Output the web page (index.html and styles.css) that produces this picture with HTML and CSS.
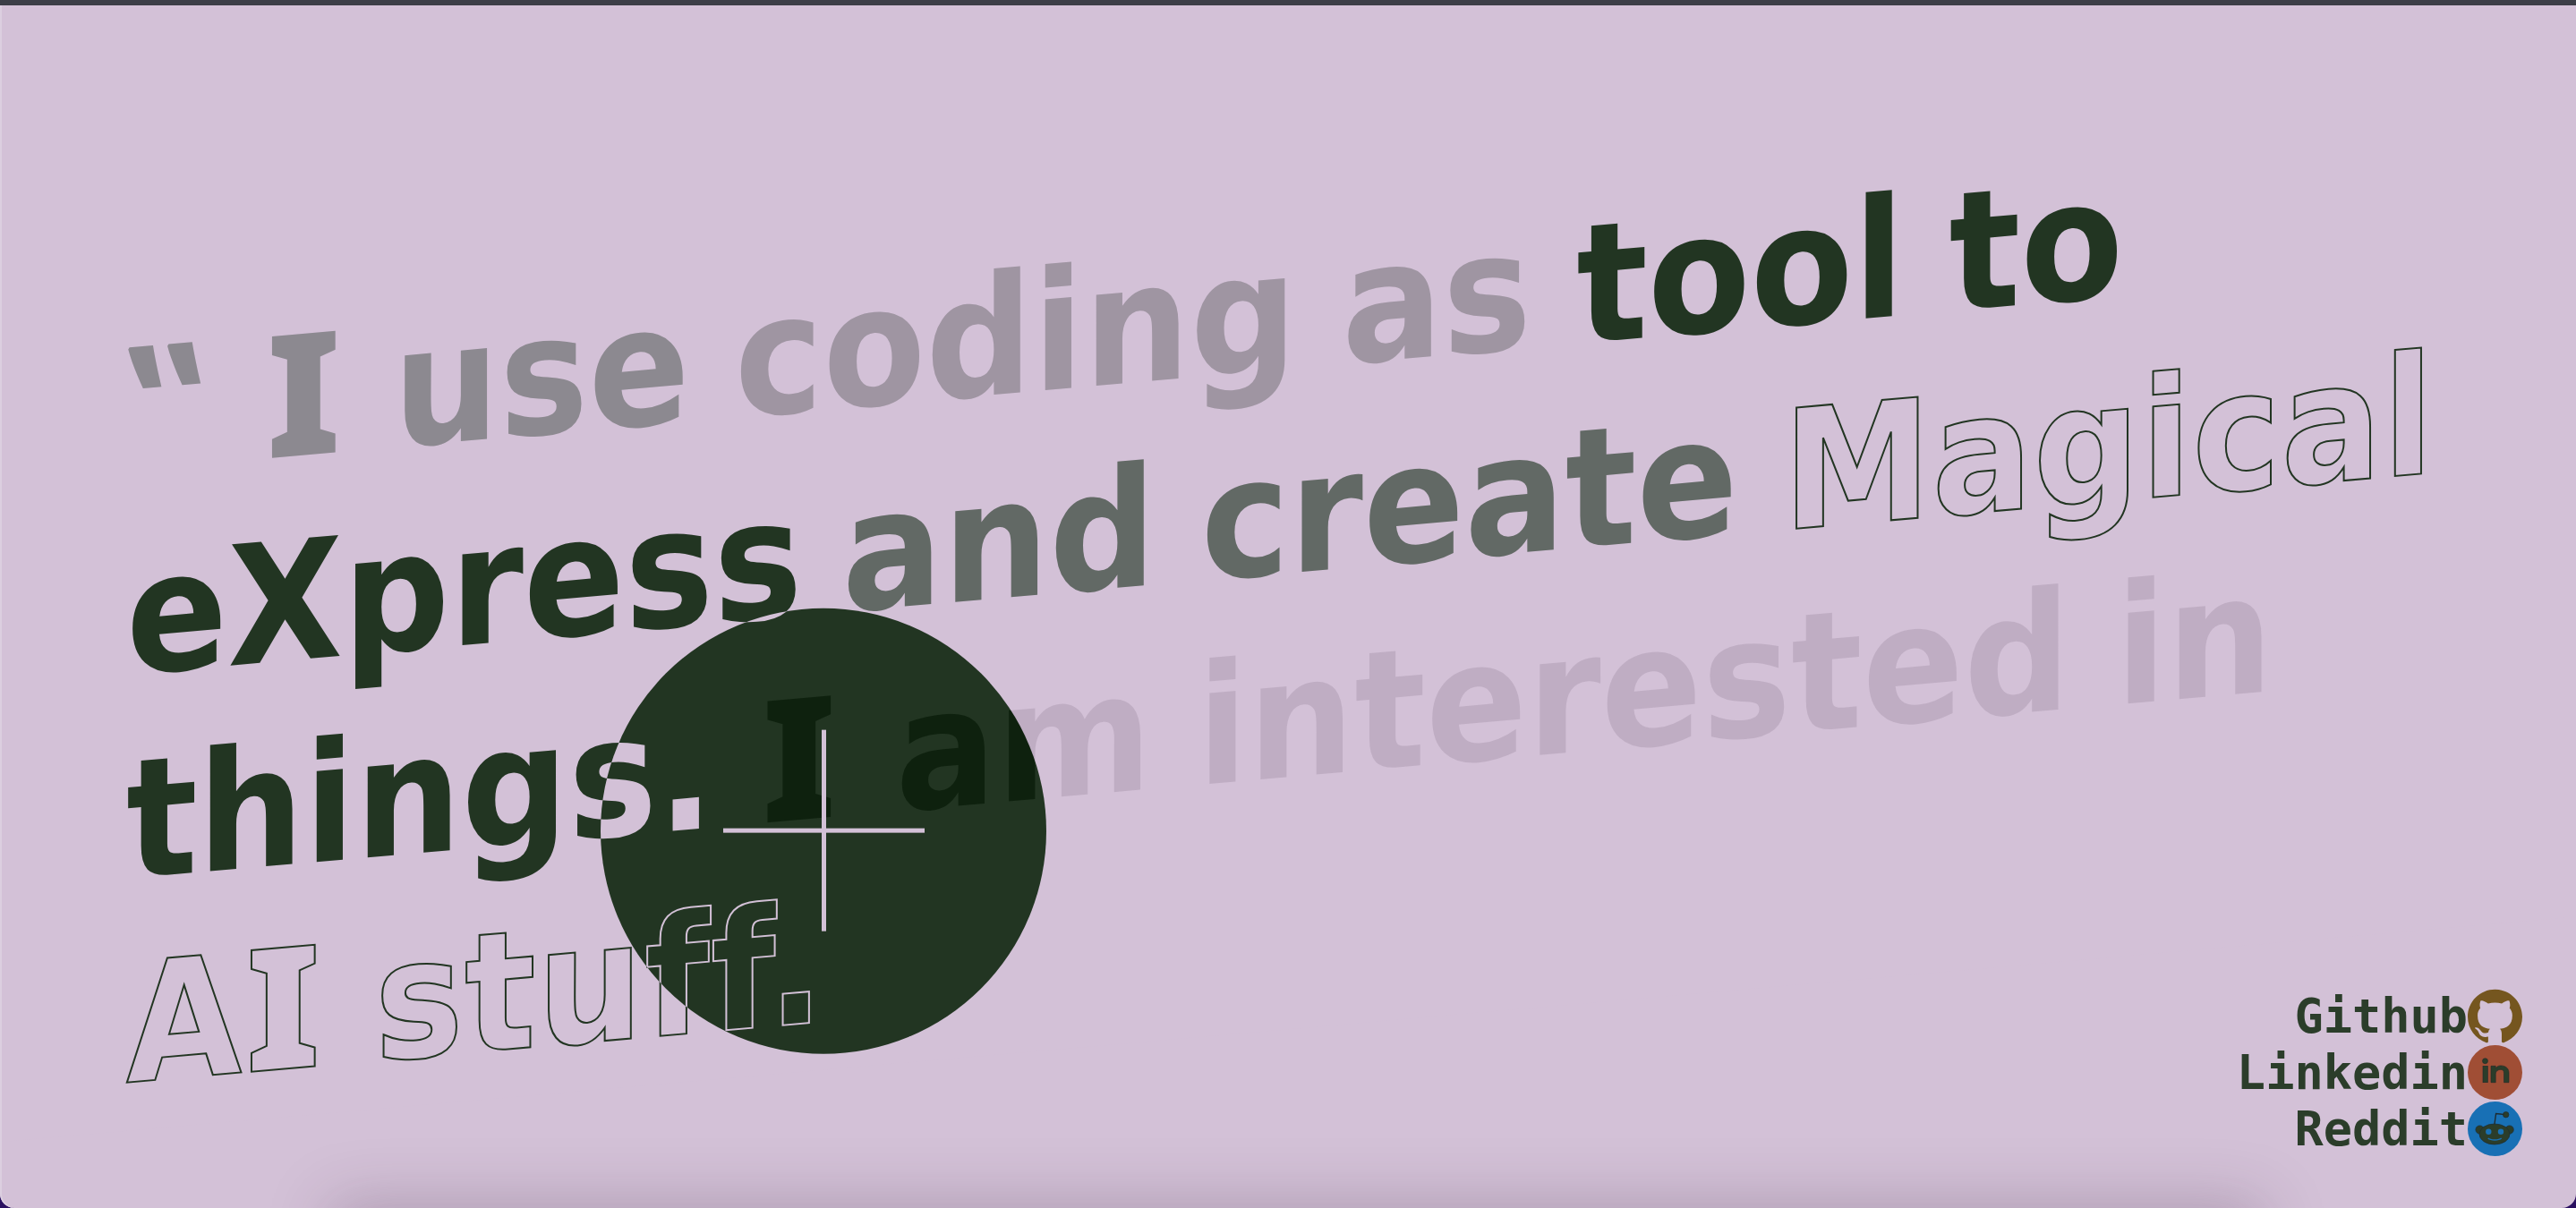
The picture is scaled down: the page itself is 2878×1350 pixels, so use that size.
FILE: index.html
```html
<!DOCTYPE html>
<html lang="en">
<head>
    <meta charset="UTF-8">
    <meta name="viewport" content="width=device-width, initial-scale=1.0">
    <title>Portfolio</title>
    <link rel="stylesheet" href="styles.css">
</head>
<body>
<main class="page">
    <div class="hero-layer">
        <h1 class="quote">
            <span class="fade-1"><span class="mark">‟</span> <span class="slab">I</span> use </span><span class="fade-2">coding as </span>tool to<br>
            eXpress <span class="fade-3">and create </span><span class="outline magical">Magical</span><br>
            things. <span class="fade-4"><span class="slab">I</span> am interested in</span><br>
            <span class="outline">A<span class="slab">I</span> stuff.</span>
        </h1>
        <div class="cursor"></div>
        <div class="cross"></div>
    </div>
    <div class="bottom-glow"></div>
    <nav class="socials">
        <a class="social">Github
            <svg class="badge" viewBox="0 0 24 24"><path fill="#75561f" d="M12 .297c-6.63 0-12 5.373-12 12 0 5.303 3.438 9.8 8.205 11.385.6.113.82-.258.82-.577 0-.285-.01-1.04-.015-2.04-3.338.724-4.042-1.61-4.042-1.61C4.422 18.07 3.633 17.7 3.633 17.7c-1.087-.744.084-.729.084-.729 1.205.084 1.838 1.236 1.838 1.236 1.07 1.835 2.809 1.305 3.495.998.108-.776.417-1.305.76-1.605-2.665-.3-5.466-1.332-5.466-5.93 0-1.31.465-2.38 1.235-3.22-.135-.303-.54-1.523.105-3.176 0 0 1.005-.322 3.3 1.23.96-.267 1.98-.399 3-.405 1.02.006 2.04.138 3 .405 2.28-1.552 3.285-1.23 3.285-1.23.645 1.653.24 2.873.12 3.176.765.84 1.23 1.91 1.23 3.22 0 4.61-2.805 5.625-5.475 5.92.42.36.81 1.096.81 2.22 0 1.606-.015 2.896-.015 3.286 0 .315.21.69.825.57C20.565 22.092 24 17.592 24 12.297c0-6.627-5.373-12-12-12"/></svg>
        </a>
        <a class="social">Linkedin
            <svg class="badge" viewBox="0 0 61 61">
                <circle cx="30.5" cy="30.5" r="30.5" fill="#a04e35"/>
                <g fill="#2b3d2a" stroke="#1f2a2a" stroke-width=".6">
                    <circle cx="19.5" cy="17.7" r="3"/>
                    <rect x="17" y="23.3" width="5.3" height="18.4"/>
                    <path d="M26 23.3h5.2v2.6c1.3-2 3.2-3 5.6-3 4.6 0 9.2 2.2 9.2 8.2v10.6h-5.5V31.5c0-2.8-1.2-4.2-3.5-4.2-3 0-5.8 1.5-5.8 5v9.4H26z"/>
                </g>
            </svg>
        </a>
        <a class="social">Reddit
            <svg class="badge" viewBox="0 0 61 61">
                <circle cx="30.5" cy="30.5" r="30.5" fill="#1870b5"/>
                <g fill="#2b3d2a" stroke="#1e2b30" stroke-width=".7">
                    <circle cx="13.5" cy="31.5" r="4.6"/>
                    <circle cx="46.7" cy="31.5" r="4.6"/>
                    <ellipse cx="30" cy="36.5" rx="17" ry="11.5"/>
                    <circle cx="42.7" cy="14.7" r="3.2"/>
                </g>
                <path d="M30 25l1.6-11.5 9 1" fill="none" stroke="#1e2b30" stroke-width="1.4"/>
                <circle cx="23.3" cy="33.7" r="3.2" fill="#1870b5"/>
                <circle cx="37" cy="33.7" r="3.2" fill="#1870b5"/>
                <path d="M22.7 41c3 2.6 12 2.6 15 0" fill="none" stroke="#1870b5" stroke-width="1.4"/>
            </svg>
        </a>
    </nav>
</main>
</body>
</html>
```

FILE: styles.css
```css
* { box-sizing: border-box; }
html, body { margin: 0; height: 100%; background: #2a1060; overflow: hidden; }

/* Page card */
.page {
    position: relative;
    height: 1350px;
    background: #d3c1d7;
    border-top: 6px solid #3c3e47;
    border-radius: 0 0 16px 16px;
    box-shadow: inset 2px 0 0 #dccfe0;
    overflow: hidden;
}

/* Skewed layer: keeps text and cursor in one blending group */
.hero-layer {
    position: relative;
    height: 1270px;
    margin-left: 2px;
    padding: 354px 0 0 139px;
    background: #d3c1d7;
    transform: skewY(-5deg);
    transform-origin: 0 0;
}
.quote {
    margin: 0;
    font-family: "DejaVu Sans", sans-serif;
    font-stretch: condensed;
    font-weight: 700;
    font-size: 185.5px;
    line-height: 228px;
    word-spacing: -8px;
    color: #223522;
    white-space: nowrap;
}
.slab { font-family: "Noto Sans", sans-serif; font-weight: 900; font-size: 190px; line-height: 0; margin: 0 8px 0 3px; }
.mark { font-family: "Noto Sans", sans-serif; font-size: 192px; line-height: 0; margin-right: 18px; }
.fade-1 { color: #8c8990; }
.fade-2 { color: #9f95a2; }
/* these two sit above the cursor and blend with it */
.fade-3 { position: relative; z-index: 2; margin-left: -6px; color: #715872; mix-blend-mode: difference; }
.fade-4 { position: relative; z-index: 2; color: #141414; mix-blend-mode: difference; }
.fade-4 .slab { margin-right: 16px; }
.outline { color: transparent; -webkit-text-stroke: 2px #223522; letter-spacing: 1.2px; }
.magical { letter-spacing: .5px; }

/* Cursor */
.cursor {
    position: absolute;
    left: 669px;
    top: 754px;
    z-index: 1;
    width: 498px;
    height: 498px;
    border-radius: 50%;
    background: #f5f6f9;
    mix-blend-mode: difference;
    transform: skewY(5deg);
}
.cross {
    position: absolute;
    left: 806px;
    top: 890px;
    z-index: 3;
    width: 225px;
    height: 225px;
    background:
        linear-gradient(#d3c1d7, #d3c1d7) center / 100% 5px no-repeat,
        linear-gradient(#d3c1d7, #d3c1d7) center / 5px 100% no-repeat;
    transform: skewY(5deg);
}

.bottom-glow {
    position: absolute;
    left: 390px;
    right: 370px;
    bottom: -46px;
    height: 30px;
    box-shadow: 0 0 70px 20px rgba(60, 40, 60, .26);
}

/* Social links */
.socials {
    position: absolute;
    right: 60px;
    bottom: 57px;
    display: flex;
    flex-direction: column;
    align-items: flex-end;
}
.social {
    display: flex;
    align-items: center;
    font-family: "DejaVu Sans Mono", monospace;
    font-weight: 700;
    font-size: 53.6px;
    line-height: 63px;
    color: #2b3d2a;
}
.badge { width: 61px; height: 61px; flex: none; }
```
